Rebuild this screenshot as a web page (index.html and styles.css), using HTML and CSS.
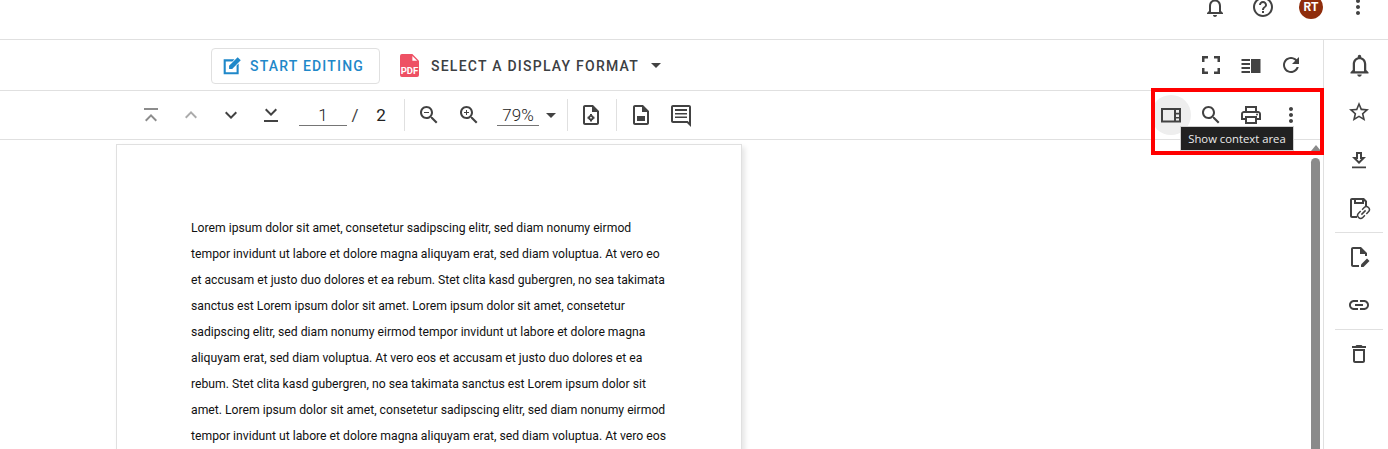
FILE: index.html
```html
<!DOCTYPE html>
<html lang="en">
<head>
  <meta charset="UTF-8">
  <meta name="viewport" content="width=device-width, initial-scale=1.0">
  <title>Document viewer</title>
  <link rel="stylesheet" href="styles.css">
</head>
<body>
  <header class="topbar">
    <button class="icon-btn"><svg viewBox="0 0 24 24"><path d="M12 22c1.1 0 2-.9 2-2h-4c0 1.1.9 2 2 2zm6-6v-5c0-3.07-1.63-5.64-4.5-6.32V4c0-.83-.67-1.5-1.5-1.5s-1.5.67-1.5 1.5v.68C7.64 5.36 6 7.92 6 11v5l-2 2v1h16v-1l-2-2zm-2 1H8v-6c0-2.48 1.51-4.5 4-4.5s4 2.02 4 4.5v6z"/></svg></button>
    <button class="icon-btn"><svg viewBox="0 0 24 24"><path d="M11 18h2v-2h-2v2zm1-16C6.48 2 2 6.48 2 12s4.48 10 10 10 10-4.48 10-10S17.52 2 12 2zm0 18c-4.41 0-8-3.59-8-8s3.59-8 8-8 8 3.59 8 8-3.59 8-8 8zm0-14c-2.21 0-4 1.79-4 4h2c0-1.1.9-2 2-2s2 .9 2 2c0 2-3 1.75-3 5h2c0-2.25 3-2.5 3-5 0-2.21-1.79-4-4-4z"/></svg></button>
    <div class="avatar">RT</div>
    <button class="icon-btn more-top"><svg viewBox="0 0 24 24"><path d="M12 8c1.1 0 2-.9 2-2s-.9-2-2-2-2 .9-2 2 .9 2 2 2zm0 2c-1.1 0-2 .9-2 2s.9 2 2 2 2-.9 2-2-.9-2-2-2zm0 6c-1.1 0-2 .9-2 2s.9 2 2 2 2-.9 2-2-.9-2-2-2z"/></svg></button>
  </header>

  <div class="workspace">
    <main class="viewer">
      <div class="format-bar">
        <button class="edit-btn">
          <svg viewBox="0 0 24 24"><path d="M2 4h13l-2.500 2.500H4.500v13h13v-8l2.500-2.500V22H2z"/><path d="M8.500 15.500v-3.700L18.800 1.500l3.700 3.700L12.200 15.500z"/></svg>
          START EDITING
        </button>
        <svg class="pdf-icon" viewBox="0 0 20 24"><path d="M2 0h11l7 7v15a2 2 0 0 1-2 2H2a2 2 0 0 1-2-2V2a2 2 0 0 1 2-2z"/><path class="fold" d="M13 2l5 5h-5z"/></svg>
        <span class="pdf-tag">PDF</span>
        <span class="format-label">SELECT A DISPLAY FORMAT</span>
        <span class="caret format-caret"></span>
        <div class="bar-right">
          <button class="icon-btn"><svg viewBox="0 0 24 24"><path d="M3 15h2.500v3.500H9V21H3zM3 9V3h6v2.500H5.500V9zM15 3h6v6h-2.500V5.500H15zM18.500 15H21v6h-6v-2.500h3.500z"/></svg></button>
          <button class="icon-btn"><svg viewBox="0 0 24 24"><path d="M2.500 6H11v2H2.500zM2.500 10H11v2H2.500zM2.500 14H11v2H2.500zM2.500 18H11v2H2.500z"/><path d="M12 6h9.500v14H12z"/></svg></button>
          <button class="icon-btn"><svg viewBox="0 0 24 24"><path d="M17.650 6.350C16.200 4.900 14.210 4 12 4c-4.420 0-7.990 3.580-7.990 8s3.570 8 7.990 8c3.730 0 6.840-2.550 7.730-6h-2.080c-.82 2.330-3.040 4-5.650 4-3.310 0-6-2.690-6-6s2.690-6 6-6c1.660 0 3.140.69 4.220 1.780L13 11h7V4l-2.350 2.350z"/></svg></button>
        </div>
      </div>

      <div class="page-bar">
        <button class="icon-btn muted"><svg viewBox="0 0 24 24"><path d="M5 5h14v2H5zM7.410 18.410 12 13.830l4.590 4.580L18 17l-6-6-6 6z"/></svg></button>
        <button class="icon-btn faint"><svg viewBox="0 0 24 24"><path d="M7.410 15.410 12 10.830l4.590 4.580L18 14l-6-6-6 6z"/></svg></button>
        <button class="icon-btn"><svg viewBox="0 0 24 24"><path d="M7.410 8.590 12 13.170l4.590-4.580L18 10l-6 6-6-6z"/></svg></button>
        <button class="icon-btn"><svg viewBox="0 0 24 24"><path d="M7.410 5.590 12 10.170l4.590-4.580L18 7l-6 6-6-6zM5 17h14v2H5z"/></svg></button>
        <span class="field page-field">1</span>
        <span class="slash">/</span>
        <span class="page-total">2</span>
        <span class="divider first-div"></span>
        <button class="icon-btn"><svg viewBox="0 0 24 24"><path d="M15.500 14h-.79l-.28-.27C15.410 12.590 16 11.110 16 9.500 16 5.910 13.090 3 9.500 3S3 5.910 3 9.500 5.910 16 9.500 16c1.610 0 3.090-.59 4.230-1.570l.27.28v.79l5 4.990L20.490 19l-4.990-5zm-6 0C7.010 14 5 11.990 5 9.500S7.010 5 9.500 5 14 7.010 14 9.500 11.990 14 9.500 14zM7 9h5v1H7z"/></svg></button>
        <button class="icon-btn"><svg viewBox="0 0 24 24"><path d="M15.500 14h-.79l-.28-.27C15.410 12.590 16 11.110 16 9.500 16 5.910 13.090 3 9.500 3S3 5.910 3 9.500 5.910 16 9.500 16c1.610 0 3.090-.59 4.230-1.570l.27.28v.79l5 4.990L20.490 19l-4.990-5zm-6 0C7.010 14 5 11.990 5 9.500S7.010 5 9.500 5 14 7.010 14 9.500 11.990 14 9.500 14zM12 10h-2v2H9v-2H7V9h2V7h1v2h2v1z"/></svg></button>
        <span class="field zoom-field">79%</span>
        <span class="caret zoom-caret"></span>
        <span class="divider zoom-div"></span>
        <button class="icon-btn"><svg viewBox="0 0 24 24"><path d="M14 2H6c-1.100 0-2 .9-2 2v16c0 1.100.9 2 2 2h12c1.100 0 2-.9 2-2V8l-6-6zm4 18H6V4h7v5h5v11z"/><path d="M11 11h2v1.500h-2zM11 17h2v1.500h-2zM8.500 13.700H10v2H8.500zM14 13.700h1.500v2H14z"/><path fill-rule="evenodd" d="M12 12a2.700 2.700 0 1 1 0 5.400 2.700 2.700 0 0 1 0-5.400zm0 1.800a.9.9 0 1 0 0 1.800.9.9 0 0 0 0-1.800z"/></svg></button>
        <span class="divider doc-div"></span>
        <button class="icon-btn"><svg viewBox="0 0 24 24"><path d="M14 2H6c-1.100 0-2 .9-2 2v16c0 1.100.9 2 2 2h12c1.100 0 2-.9 2-2V8l-6-6zm4 18H6V4h7v5h5v11z"/><path d="M8 13h8v5H8z"/></svg></button>
        <button class="icon-btn"><svg viewBox="0 0 24 24"><path d="M20 2H4c-1.100 0-2 .9-2 2v14c0 1.100.9 2 2 2h14l4 4V4c0-1.100-.9-2-2-2zm0 17.170L18.830 18H4V4h16v15.170zM6 6h12v2H6zM6 10h12v1.500H6zM6 13.500h12V15H6z"/></svg></button>
        <div class="bar-right">
          <button class="icon-btn context-btn"><svg viewBox="0 0 24 24"><path fill-rule="evenodd" d="M2 5h20v14.500H2zm2 2v10.500h11V7zm13 0v2.800h3V7zm0 4.500v2.500h3v-2.500zm0 4v2h3v-2z"/></svg></button>
          <button class="icon-btn"><svg viewBox="0 0 24 24"><path d="M15.500 14h-.79l-.28-.27C15.410 12.590 16 11.110 16 9.500 16 5.910 13.090 3 9.500 3S3 5.910 3 9.500 5.910 16 9.500 16c1.610 0 3.090-.59 4.230-1.570l.27.28v.79l5 4.990L20.490 19l-4.990-5zm-6 0C7.010 14 5 11.990 5 9.500S7.010 5 9.500 5 14 7.010 14 9.500 11.990 14 9.500 14z"/></svg></button>
          <button class="icon-btn"><svg viewBox="0 0 24 24"><path d="M19 8h-1V3H6v5H5c-1.660 0-3 1.340-3 3v6h4v4h12v-4h4v-6c0-1.660-1.340-3-3-3zM8 5h8v3H8V5zm8 12v2H8v-4h8v2zm2-2v-2H6v2H4v-4c0-.55.45-1 1-1h14c.55 0 1 .45 1 1v4h-2z"/><circle cx="18" cy="11.500" r="1"/></svg></button>
          <button class="icon-btn"><svg viewBox="0 0 24 24"><path d="M12 8c1.100 0 2-.9 2-2s-.9-2-2-2-2 .9-2 2 .9 2 2 2zm0 2c-1.100 0-2 .9-2 2s.9 2 2 2 2-.9 2-2-.9-2-2-2zm0 6c-1.100 0-2 .9-2 2s.9 2 2 2 2-.9 2-2-.9-2-2-2z"/></svg></button>
        </div>
      </div>

      <div class="doc-area">
        <article class="doc-page">
          <p>Lorem ipsum dolor sit amet, consetetur sadipscing elitr, sed diam nonumy eirmod</p>
          <p>tempor invidunt ut labore et dolore magna aliquyam erat, sed diam voluptua. At vero eo</p>
          <p>et accusam et justo duo dolores et ea rebum. Stet clita kasd gubergren, no sea takimata</p>
          <p>sanctus est Lorem ipsum dolor sit amet. Lorem ipsum dolor sit amet, consetetur</p>
          <p>sadipscing elitr, sed diam nonumy eirmod tempor invidunt ut labore et dolore magna</p>
          <p>aliquyam erat, sed diam voluptua. At vero eos et accusam et justo duo dolores et ea</p>
          <p>rebum. Stet clita kasd gubergren, no sea takimata sanctus est Lorem ipsum dolor sit</p>
          <p>amet. Lorem ipsum dolor sit amet, consetetur sadipscing elitr, sed diam nonumy eirmod</p>
          <p>tempor invidunt ut labore et dolore magna aliquyam erat, sed diam voluptua. At vero eos</p>
        </article>
        <div class="scrollbar">
          <span class="scroll-arrow"></span>
          <span class="scroll-thumb"></span>
        </div>
      </div>
    </main>

    <aside class="rail">
      <button class="icon-btn rail-bell"><svg viewBox="0 0 24 24"><path d="M12 22c1.100 0 2-.9 2-2h-4c0 1.100.9 2 2 2zm6-6v-5c0-3.070-1.630-5.640-4.500-6.320V4c0-.83-.67-1.500-1.500-1.500s-1.500.67-1.500 1.500v.68C7.640 5.360 6 7.920 6 11v5l-2 2v1h16v-1l-2-2zm-2 1H8v-6c0-2.480 1.510-4.500 4-4.500s4 2.020 4 4.500v6z"/></svg></button>
      <button class="icon-btn"><svg viewBox="0 0 24 24"><path d="M22 9.240l-7.190-.62L12 2 9.190 8.630 2 9.240l5.460 4.730L5.820 21 12 17.270 18.180 21l-1.630-7.030L22 9.240zM12 15.400l-3.760 2.270 1-4.280-3.320-2.880 4.380-.38L12 6.100l1.710 4.040 4.380.38-3.320 2.880 1 4.280L12 15.400z"/></svg></button>
      <button class="icon-btn"><svg viewBox="0 0 24 24"><path d="M15 9V4H9v5H5l7 7 7-7h-4zM11 6h2v5h1.200L12 13.200 9.800 11H11V6zM5 18.500v1.800h14v-1.800H5z"/></svg></button>
      <button class="icon-btn"><svg viewBox="0 0 24 24"><path d="M5 2h12l3 3v6h-2V6l-1-1v3H7V4H5v16h5v2H5c-1.100 0-2-.9-2-2V4c0-1.100.9-2 2-2zm4 2v2h6V4z"/><g transform="rotate(-45 16.500 16.500)" fill="none" stroke="#424242" stroke-width="1.500"><path d="M15.500 13.500h-3a3 3 0 0 0 0 6h3M17.500 13.500h3a3 3 0 0 1 0 6h-3M13.500 16.500h6"/></g></svg></button>
      <span class="rail-div"></span>
      <button class="icon-btn"><svg viewBox="0 0 24 24"><path d="M14 2H6c-1.100 0-2 .9-2 2v16c0 1.100.9 2 2 2h6v-2H6V4h7v5h5v2h2V8l-6-6z"/><path d="M14 22v-2.500l6-6 2.500 2.500-6 6z"/></svg></button>
      <button class="icon-btn"><svg viewBox="0 0 24 24"><path d="M3.900 12c0-1.710 1.390-3.100 3.100-3.100h4V7H7c-2.760 0-5 2.240-5 5s2.240 5 5 5h4v-1.900H7c-1.710 0-3.100-1.390-3.100-3.100zM8 13h8v-2H8v2zm9-6h-4v1.900h4c1.710 0 3.100 1.390 3.100 3.100s-1.390 3.100-3.100 3.100h-4V17h4c2.760 0 5-2.240 5-5s-2.240-5-5-5z"/></svg></button>
      <span class="rail-div"></span>
      <button class="icon-btn"><svg viewBox="0 0 24 24"><path d="M6 19c0 1.100.9 2 2 2h8c1.100 0 2-.9 2-2V7H6v12zM8 9h8v10H8V9zm7.500-5l-1-1h-5l-1 1H5v2h14V4h-3.500z"/></svg></button>
    </aside>
  </div>

  <div class="tooltip">Show context area</div>
  <div class="highlight"></div>
</body>
</html>
```

FILE: styles.css
```css
* {
  box-sizing: border-box;
}
html, body {
  height: 100%;
}
body {
  margin: 0;
  overflow: hidden;
  background: white;
  color: #424242;
  font-family: Roboto, "Liberation Sans", sans-serif;
  position: relative;
}
button {
  font-family: inherit;
  background: none;
  border: none;
  padding: 0;
}
.icon-btn {
  width: 40px;
  height: 40px;
  flex: none;
  display: flex;
  align-items: center;
  justify-content: center;
}
.icon-btn svg {
  width: 24px;
  height: 24px;
  fill: #424242;
}
.muted svg {
  fill: #8c8c8c;
}
.faint svg {
  fill: #ababab;
}

/* top bar, its icons are cut off by the window edge */
.topbar {
  height: 40px;
  border-bottom: 1px solid #e0e0e0;
  display: flex;
  justify-content: flex-end;
  align-items: flex-start;
  overflow: hidden;
  padding-right: 10px;
}
.topbar .icon-btn {
  margin-top: -13px;
  margin-right: 8px;
}
.topbar .more-top {
  margin-left: 15px;
  margin-right: 0;
}
.avatar {
  width: 24px;
  height: 24px;
  margin-top: -5px;
  margin-left: 8px;
  border-radius: 50%;
  background: #8f2d0c;
  color: white;
  font-size: 12px;
  font-weight: 700;
  line-height: 24px;
  text-align: center;
}

.workspace {
  display: flex;
  height: 409px;
}
.viewer {
  width: 1324px;
  border-right: 1px solid #e0e0e0;
  display: flex;
  flex-direction: column;
}
.bar-right {
  margin-left: auto;
  display: flex;
  align-items: center;
  padding-right: 12px;
}

.format-bar {
  height: 51px;
  flex: none;
  border-bottom: 1px solid #e0e0e0;
  display: flex;
  align-items: center;
  padding-left: 211px;
  position: relative;
}
.edit-btn {
  width: 169px;
  height: 36px;
  border: 1px solid #e0e0e0;
  border-radius: 4px;
  display: flex;
  align-items: center;
  gap: 8px;
  padding-left: 10px;
  margin-top: 1px;
  color: #1f88c9;
  font-size: 14px;
  font-weight: 500;
  letter-spacing: 1.2px;
}
.edit-btn svg {
  width: 20px;
  height: 20px;
  fill: #1f88c9;
}
.pdf-icon {
  width: 19px;
  height: 23px;
  margin-left: 20px;
  margin-top: 1px;
  fill: #ee5164;
}
.pdf-icon .fold {
  fill: white;
}
.pdf-tag {
  position: absolute;
  left: 400px;
  top: 26px;
  width: 19px;
  text-align: center;
  color: white;
  font-size: 9.5px;
  font-weight: 700;
  line-height: 9px;
}
.format-label {
  margin-left: 12px;
  margin-top: 1px;
  font-size: 14px;
  font-weight: 500;
  letter-spacing: 1.24px;
  color: #3c4043;
}
.caret {
  width: 0;
  height: 0;
  border-left: 5px solid transparent;
  border-right: 5px solid transparent;
  border-top: 5px solid #424242;
}
.format-caret {
  margin-left: 12px;
  margin-top: 1px;
}

.page-bar {
  height: 49px;
  flex: none;
  border-bottom: 1px solid #e0e0e0;
  display: flex;
  align-items: center;
  padding-left: 131px;
}
.field {
  border-bottom: 1px solid #757575;
  text-align: center;
  font-size: 17px;
  font-weight: 300;
  line-height: 19px;
  height: 20px;
  color: #222;
  margin-top: 1px;
}
.page-field {
  width: 48px;
  margin-left: 8px;
}
.slash {
  width: 8px;
  margin-left: 4px;
  font-size: 17px;
  text-align: center;
}
.page-total {
  width: 12px;
  margin-left: 16px;
  font-size: 17px;
  text-align: center;
  color: #222;
}
.divider {
  width: 1px;
  height: 32px;
  background: #e0e0e0;
  flex: none;
}
.first-div {
  margin-left: 17px;
  margin-right: 4px;
}
.zoom-field {
  width: 42px;
  margin-left: 8px;
}
.zoom-caret {
  margin-left: 7px;
  margin-top: 1px;
}
.zoom-div {
  margin-left: 11px;
  margin-right: 3px;
}
.doc-div {
  margin-left: 5px;
  margin-right: 4px;
}
.context-btn {
  border-radius: 50%;
  background: #eeeeee;
}

.doc-area {
  flex: 1;
  min-height: 0;
  display: flex;
  justify-content: space-between;
  overflow: hidden;
}
.doc-page {
  width: 626px;
  height: 700px;
  margin: 4px 0 0 116px;
  padding: 70px 0 0 74px;
  background: white;
  border: 1px solid #e0e0e0;
  box-shadow: 3px 3px 5px rgba(0, 0, 0, 0.1);
  color: #111;
  font-size: 12.2px;
  line-height: 26px;
}
.doc-page p {
  margin: 0;
  white-space: nowrap;
}
.scrollbar {
  width: 13px;
  display: flex;
  flex-direction: column;
  align-items: center;
  margin-right: 1px;
}
.scroll-arrow {
  width: 0;
  height: 0;
  margin-top: 5px;
  border-left: 5px solid transparent;
  border-right: 5px solid transparent;
  border-bottom: 6px solid #8a8a8a;
}
.scroll-thumb {
  width: 9px;
  flex: 1;
  margin-top: 7px;
  background: #8a8a8a;
  border-radius: 5px 5px 0 0;
}

.rail {
  flex: 1;
  display: flex;
  flex-direction: column;
  align-items: center;
  padding-left: 6px;
}
.rail .icon-btn {
  height: 48px;
}
.rail .rail-bell svg {
  width: 27px;
  height: 27px;
  margin-top: 2px;
}
.rail-div {
  width: 48px;
  height: 1px;
  flex: none;
  background: #e0e0e0;
}

/* overlays */
.tooltip {
  position: absolute;
  left: 1180px;
  top: 126px;
  width: 114px;
  height: 25px;
  background: #212121;
  border: 1px solid #d0d0d0;
  color: #ececec;
  font-family: "Open Sans", sans-serif;
  font-size: 11.3px;
  line-height: 23px;
  text-align: center;
}
.highlight {
  position: absolute;
  left: 1151px;
  top: 88px;
  width: 173px;
  height: 67px;
  border: 4px solid #f00;
}
```
